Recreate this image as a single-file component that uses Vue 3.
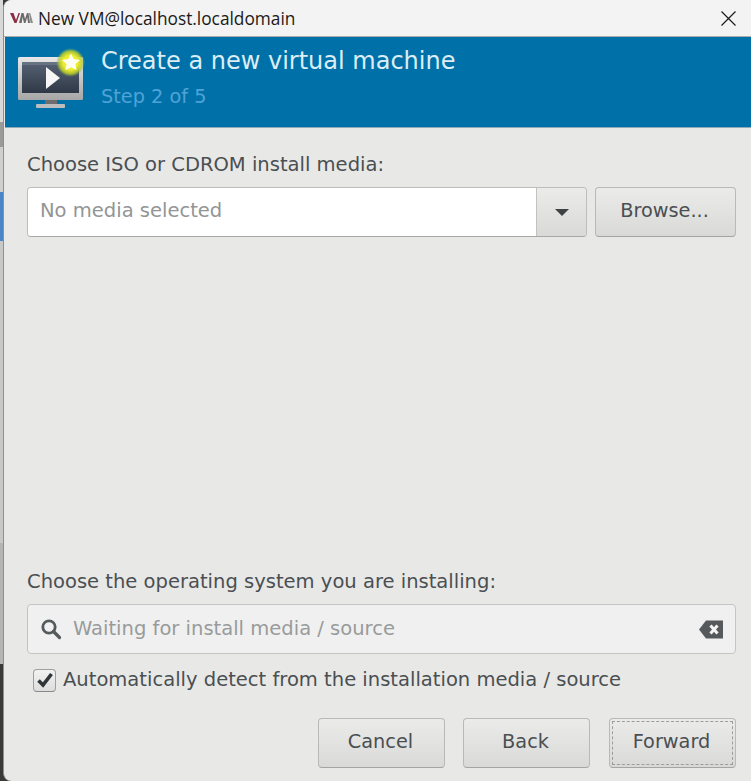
<script setup>
const segments = [
  { h: 122, c: '#d9d9d9' }, { h: 25, c: '#9a9a9a' }, { h: 45, c: '#cfcfcf' },
  { h: 49, c: '#4a86c5' }, { h: 302, c: '#c8c8c8' }, { h: 121, c: '#b5b5b5' },
  { h: 117, c: '#3a3a3a' }
]
</script>

<template>
  <div class="screen">
    <div class="backdrop">
      <div v-for="(s, i) in segments" :key="i" :style="{ height: s.h + 'px', background: s.c }"></div>
    </div>
    <div class="window">
      <div class="titlebar">
        <svg class="vmm" width="23" height="12" viewBox="0 0 23 12">
          <path d="M0 1h3.500l2.500 7L8.500 1H10L6.500 11h-2z" fill="#8a2f45"/>
          <path d="M9 11l2.500-10h2l1.500 6L17 1h1.500L20 11h-2l-.8-6-1.700 6h-1.500l-1.500-6-.8 6z" fill="#6b6b6b"/>
          <path d="M19 1h1.200L23 11h-2.500z" fill="#8c8c8c"/>
        </svg>
        <span class="title-text">New VM@localhost.localdomain</span>
        <svg class="close" width="15" height="15" viewBox="0 0 15 15">
          <path d="M.5.500l14 14M14.500.500l-14 14" stroke="#1a1a1a" stroke-width="1.200" fill="none"/>
        </svg>
      </div>
      <header class="banner">
        <svg class="hero" width="70" height="66" viewBox="0 0 70 66">
          <defs>
            <radialGradient id="glow">
              <stop offset="0.5" stop-color="#eeee30"/>
              <stop offset="0.78" stop-color="#c0d028" stop-opacity="0.85"/>
              <stop offset="1" stop-color="#6fae58" stop-opacity="0"/>
            </radialGradient>
            <linearGradient id="screen" x1="0" y1="0" x2="0" y2="1">
              <stop offset="0" stop-color="#566274"/>
              <stop offset="1" stop-color="#2f3846"/>
            </linearGradient>
            <linearGradient id="bezel" x1="0" y1="0" x2="0" y2="1">
              <stop offset="0" stop-color="#e8e8e8"/>
              <stop offset="1" stop-color="#a6a6a6"/>
            </linearGradient>
          </defs>
          <rect x="1" y="12" width="65" height="43" rx="1.500" fill="url(#bezel)"/>
          <rect x="5" y="17" width="57" height="31" fill="url(#screen)"/>
          <path d="M5 17h57v3H5z" fill="#76808e" opacity="0.6"/>
          <path d="M29 22l14 11L29 44z" fill="#f6f6f6"/>
          <rect x="28" y="55" width="12" height="4" fill="#6d6d6d"/>
          <rect x="19" y="59" width="29" height="4" rx="1" fill="#bdbdbd"/>
          <circle cx="53.500" cy="17.500" r="14.500" fill="url(#glow)"/>
          <path d="M54 8.500l2.700 5.600 6.300.8-4.600 4.200 1.200 6.200L54 22.300l-5.600 3 1.200-6.200L45 14.900l6.300-.8z" fill="#fffef2"/>
        </svg>
        <div class="banner-text">
          <div class="banner-title">Create a new virtual machine</div>
          <div class="banner-step">Step 2 of 5</div>
        </div>
      </header>
      <main class="content">
        <section class="media">
          <label class="label">Choose ISO or CDROM install media:</label>
          <div class="media-row">
            <div class="combo">
              <div class="combo-entry">No media selected</div>
              <div class="combo-arrow"><span class="caret"></span></div>
            </div>
            <button class="btn browse">Browse...</button>
          </div>
        </section>
        <section class="os">
          <label class="label">Choose the operating system you are installing:</label>
          <div class="search">
            <svg width="22" height="22" viewBox="0 0 22 22">
              <circle cx="9" cy="9" r="6.200" fill="none" stroke="#555a5d" stroke-width="2.800"/>
              <path d="M13.500 13.500l6 6" stroke="#555a5d" stroke-width="3.200" stroke-linecap="round"/>
            </svg>
            <span class="search-text">Waiting for install media / source</span>
            <svg class="clear" width="24" height="19" viewBox="0 0 24 19">
              <path d="M7 0.500H24V18.500H7L0 9.500z" fill="#55595c"/>
              <path d="M11.500 5.500l7 8M18.500 5.500l-7 8" stroke="#f4f4f4" stroke-width="3"/>
            </svg>
          </div>
          <div class="check-row">
            <span class="check">
              <svg width="18" height="16" viewBox="0 0 18 16">
                <path d="M2.500 8.500L7 13 15.500 2" fill="none" stroke="#31363a" stroke-width="3.600"/>
              </svg>
            </span>
            <span class="check-label">Automatically detect from the installation media / source</span>
          </div>
        </section>
        <footer class="actions">
          <button class="btn action">Cancel</button>
          <button class="btn action">Back</button>
          <button class="btn action focused"><span class="focus-ring">Forward</span></button>
        </footer>
      </main>
    </div>
  </div>
</template>

<style>
html, body { margin: 0; background: #e8e8e7; overflow: hidden; }
</style>

<style scoped>
.screen {
  display: flex;
  width: 751px;
  height: 781px;
  overflow: hidden;
  font-family: "DejaVu Sans", sans-serif;
  font-size: 19.550px;
  color: #4a4f52;
  background: #3a3a3a;
}
.backdrop { width: 3px; flex: none; }
.window {
  flex: 1;
  display: flex;
  flex-direction: column;
  background: #e8e8e7;
  border-left: 1px solid #8f8f8f;
  border-top-left-radius: 8px;
  border-bottom-left-radius: 8px;
  min-width: 0;
}
.titlebar {
  height: 36px;
  flex: none;
  display: flex;
  align-items: center;
  background: #f3f3f3;
  border-bottom: 1px solid #ababab;
  border-top-left-radius: 8px;
  padding: 0 15px 0 6px;
  font-family: "Open Sans", sans-serif;
  font-size: 17.300px;
  color: #1a1a1a;
}
.vmm { margin-right: 5px; flex: none; }
.title-text { flex: 1; }
.banner {
  height: 90px;
  flex: none;
  display: flex;
  background: #0071a8;
  border-bottom: 1px solid #8ea9b8;
  margin-left: 1px;
  padding-left: 12px;
}
.hero { margin-top: 8px; flex: none; }
.banner-text { margin-left: 14px; padding-top: 7px; }
.banner-title { font-size: 24px; line-height: 34px; color: #dcedf6; }
.banner-step { font-size: 19.300px; line-height: 24px; margin-top: 7px; color: #4fa3d6; }
.content {
  flex: 1;
  display: flex;
  flex-direction: column;
  padding: 25px 15px 13px 23px;
  min-height: 0;
}
.label { display: block; line-height: 24px; }
.media-row { display: flex; margin-top: 10px; gap: 8px; }
.combo {
  flex: 1;
  display: flex;
  height: 50px;
  box-sizing: border-box;
  border: 1px solid #bdbdbb;
  border-bottom-color: #a8a8a6;
  border-radius: 4px;
  overflow: hidden;
}
.combo-entry {
  flex: 1;
  background: #fff;
  padding-left: 12px;
  line-height: 46px;
  color: #929595;
}
.combo-arrow {
  width: 49px;
  display: flex;
  align-items: center;
  justify-content: center;
  border-left: 1px solid #c2c2c0;
  background: linear-gradient(#ebebea, #d9d9d7);
}
.caret {
  width: 0;
  height: 0;
  border-left: 7px solid transparent;
  border-right: 7px solid transparent;
  border-top: 7px solid #3e4245;
}
.btn {
  font-family: inherit;
  font-size: 19.300px;
  color: #4a4f52;
  height: 50px;
  box-sizing: border-box;
  border: 1px solid #b9b9b7;
  border-bottom-color: #a4a4a2;
  border-radius: 4px;
  background: linear-gradient(#ebebea, #d9d9d7);
  padding: 0 2px 4px 0;
}
.browse { width: 141px; }
.os { margin-top: auto; }
.search {
  margin-top: 10px;
  height: 50px;
  box-sizing: border-box;
  display: flex;
  align-items: center;
  border: 1px solid #c4c4c2;
  border-radius: 4px;
  background: #f0f0f0;
  padding: 0 12px 0 12px;
}
.search-text { flex: 1; margin-left: 11px; color: #989b9b; padding-bottom: 2px; }
.check-row { display: flex; align-items: center; margin-top: 14px; padding-left: 6px; }
.check {
  width: 21px;
  height: 21px;
  display: flex;
  align-items: center;
  justify-content: center;
  border: 1px solid #9f9f9d;
  border-bottom-color: #88888a;
  border-radius: 4px;
  background: linear-gradient(#f2f2f1, #dedede);
}
.check-label { margin-left: 7px; line-height: 24px; }
.actions {
  display: flex;
  justify-content: flex-end;
  gap: 18px;
  margin-top: 26px;
}
.action { width: 127px; }
.focused { padding: 2px; margin-left: 1px; }
.focus-ring {
  display: flex;
  align-items: center;
  justify-content: center;
  height: 100%;
  box-sizing: border-box;
  border: 1px dashed #9c9c9a;
  padding: 0 2px 4px 0;
}
</style>
